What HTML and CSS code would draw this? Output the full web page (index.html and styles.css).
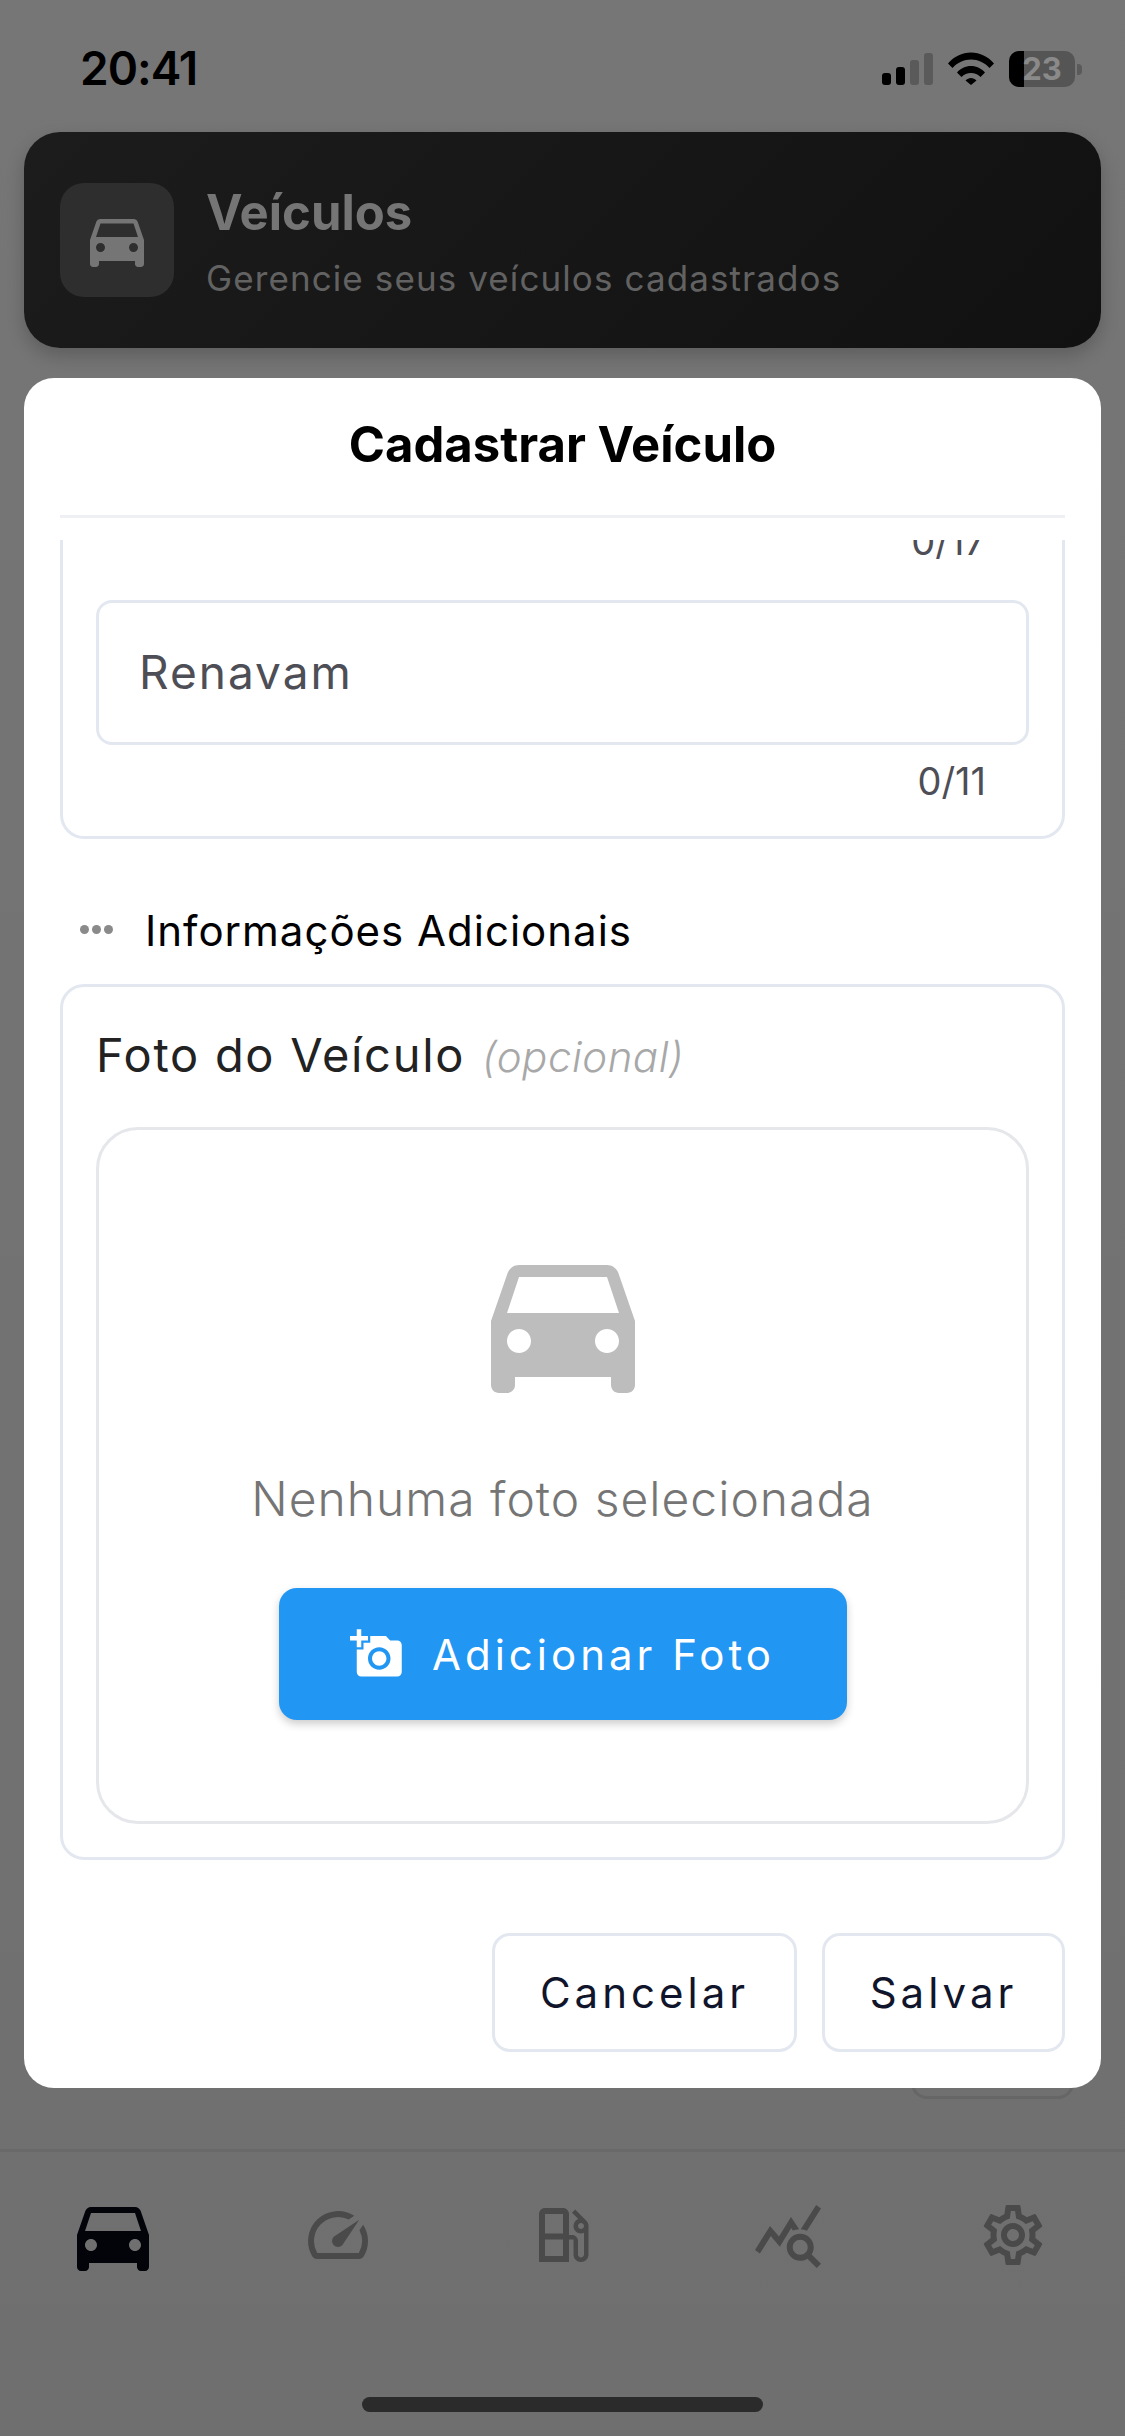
FILE: index.html
```html
<!DOCTYPE html>
<html lang="pt-BR">
<head>
<meta charset="UTF-8">
<title>Veículos</title>
<link rel="stylesheet" href="styles.css">
</head>
<body>
<svg class="defs" width="0" height="0">
  <symbol id="car" viewBox="0 0 24 24"><path fill-rule="evenodd" d="M18.92 6.01C18.72 5.42 18.16 5 17.5 5h-11c-.66 0-1.21.42-1.42 1.01L3 12v8c0 .55.45 1 1 1h1c.55 0 1-.45 1-1v-1h12v1c0 .55.45 1 1 1h1c.55 0 1-.45 1-1v-8l-2.08-5.99zM6.5 16c-.83 0-1.5-.67-1.5-1.5S5.67 13 6.5 13s1.5.67 1.5 1.5S7.33 16 6.5 16zm11 0c-.83 0-1.5-.67-1.5-1.5s.67-1.5 1.5-1.5 1.5.67 1.5 1.5-.67 1.5-1.5 1.5zM5 11l1.5-4.5h11L19 11H5z"/></symbol>
</svg>

<div class="screen">
  <div class="statusbar">
    <span class="clock">20:41</span>
    <div class="status-icons">
      <div class="signal">
        <i class="bar bar1"></i><i class="bar bar2"></i><i class="bar bar3"></i><i class="bar bar4"></i>
      </div>
      <svg class="wifi" viewBox="0 0 46 33"><path d="M0 11.5C6 4.5 14 .5 23 .5s17 4 23 11l-4.5 4.5C36.500 10.500 30 7.500 23 7.500S9.500 10.500 4.500 16z"/><path d="M9 20.500C12.500 16.500 17.500 14 23 14s10.500 2.500 14 6.500l-4.500 4.500C30 22.500 26.700 21 23 21s-7 1.500-9.500 4z"/><path d="M17.500 28.500c1.500-1.500 3.500-2.500 5.500-2.500s4 1 5.500 2.500L23 33z"/></svg>
      <div class="battery">
        <div class="battery-body"><i class="battery-fill"></i><span class="battery-num">23</span></div>
        <i class="battery-nub"></i>
      </div>
    </div>
  </div>

  <div class="page-head">
    <div class="page-head-icon"><svg class="icon72"><use href="#car"/></svg></div>
    <div class="page-head-text">
      <div class="page-title">Veículos</div>
      <div class="page-sub">Gerencie seus veículos cadastrados</div>
    </div>
  </div>

  <div class="content">
    <div class="behind-btn"></div>
  </div>

  <div class="tabbar">
    <div class="tab tab-active"><svg class="icon96"><use href="#car"/></svg></div>
    <div class="tab"><svg class="icon72" viewBox="0 0 24 24"><path d="M20.38 8.57l-1.23 1.85a8 8 0 0 1-.22 7.58H5.07A8 8 0 0 1 15.58 6.85l1.85-1.23A10 10 0 0 0 3.35 19a2 2 0 0 0 1.72 1h13.85a2 2 0 0 0 1.74-1 10 10 0 0 0-.27-10.44zm-9.79 6.84a2 2 0 0 0 2.83 0l5.66-8.49-8.49 5.66a2 2 0 0 0 0 2.83z"/></svg></div>
    <div class="tab"><svg class="icon72" viewBox="0 0 24 24"><path fill-rule="evenodd" d="M19.77 7.23l.01-.01-3.72-3.72L15 4.56l2.11 2.11c-.94.36-1.61 1.26-1.61 2.33 0 1.38 1.12 2.5 2.5 2.5.36 0 .69-.08 1-.21v7.21c0 .55-.45 1-1 1s-1-.45-1-1V14c0-1.1-.9-2-2-2h-1V5c0-1.1-.9-2-2-2H6c-1.1 0-2 .9-2 2v16h10v-7.500h1.500v5c0 1.380 1.120 2.500 2.500 2.500s2.500-1.120 2.500-2.500V9c0-.69-.28-1.320-.73-1.770zM12 13.500V19H6v-5.500h6zm0-2H6V5h6v6.500zM18 10c-.55 0-1-.45-1-1s.45-1 1-1 1 .45 1 1-.45 1-1 1z"/></svg></div>
    <div class="tab"><svg class="icon72" viewBox="0 0 24 24"><path fill-rule="evenodd" d="M19.88 18.47c.44-.7.7-1.51.7-2.39 0-2.49-2.01-4.5-4.5-4.5s-4.5 2.01-4.5 4.5 2.01 4.5 4.49 4.5c.88 0 1.7-.26 2.39-.7L21.58 23 23 21.58l-3.12-3.11zm-3.8.11c-1.38 0-2.5-1.12-2.5-2.5s1.12-2.5 2.5-2.5 2.5 1.12 2.5 2.5-1.12 2.5-2.5 2.5zm-.36-8.5c-.74.02-1.45.18-2.1.45l-.55-.83-3.8 6.18-3.01-3.52-3.63 5.81L1 17l5-8 3 3.5L13 6l2.72 4.08zm2.59.5c-.64-.28-1.33-.45-2.05-.49L21.38 2 23 3.18l-4.69 7.4z"/></svg></div>
    <div class="tab"><svg class="icon72" viewBox="0 0 24 24"><path fill-rule="evenodd" d="M19.43 12.98c.04-.32.07-.64.07-.98 0-.34-.03-.66-.07-.98l2.11-1.65c.19-.15.24-.42.12-.64l-2-3.46c-.09-.16-.26-.25-.44-.25-.06 0-.12.01-.17.03l-2.49 1c-.52-.4-1.08-.73-1.69-.98l-.38-2.65C14.46 2.18 14.25 2 14 2h-4c-.25 0-.46.18-.49.42l-.38 2.65c-.61.25-1.17.59-1.69.98l-2.49-1c-.06-.02-.12-.03-.18-.03-.17 0-.34.09-.43.25l-2 3.46c-.13.22-.07.49.12.64l2.11 1.65c-.04.32-.07.65-.07.98 0 .33.03.66.07.98l-2.11 1.65c-.19.15-.24.42-.12.64l2 3.46c.09.16.26.25.44.25.06 0 .12-.01.17-.03l2.49-1c.52.4 1.08.73 1.69.98l.38 2.65c.03.24.24.42.49.42h4c.25 0 .46-.18.49-.42l.38-2.65c.61-.25 1.17-.59 1.69-.98l2.49 1c.06.02.12.03.18.03.17 0 .34-.09.43-.25l2-3.46c.12-.22.07-.49-.12-.64l-2.11-1.65zm-1.98-1.71c.04.31.05.52.05.73 0 .21-.02.43-.05.73l-.14 1.13.89.7 1.08.84-.7 1.21-1.27-.51-1.04-.42-.9.68c-.43.32-.84.56-1.25.73l-1.06.43-.16 1.13-.2 1.35h-1.4l-.19-1.35-.16-1.13-1.06-.43c-.43-.18-.83-.41-1.23-.71l-.91-.7-1.06.43-1.27.51-.7-1.21 1.08-.84.89-.7-.14-1.13c-.03-.31-.05-.54-.05-.74s.02-.43.05-.73l.14-1.13-.89-.7-1.08-.84.7-1.21 1.27.51 1.04.42.9-.68c.43-.32.84-.56 1.25-.73l1.06-.43.16-1.13.2-1.35h1.39l.19 1.35.16 1.13 1.06.43c.43.18.83.41 1.23.71l.91.7 1.06-.43 1.27-.51.7 1.21-1.07.85-.89.7.14 1.13zM12 8c-2.21 0-4 1.79-4 4s1.79 4 4 4 4-1.790 4-4-1.790-4-4-4zm0 6c-1.100 0-2-.9-2-2s.9-2 2-2 2 .9 2 2-.9 2-2 2z"/></svg></div>
  </div>

  <div class="home-bar"><i class="home-pill"></i></div>

  <!-- modal sits over the dimmed page -->
  <div class="modal">
    <div class="modal-title">Cadastrar Veículo</div>
    <div class="modal-scroll">
      <div class="card card-cut">
        <div class="counter counter-cut">0/17</div>
        <div class="input">Renavam</div>
        <div class="counter">0/11</div>
      </div>

      <div class="section-head">
        <span class="dots"><i></i><i></i><i></i></span>
        <span class="section-title">Informações Adicionais</span>
      </div>

      <div class="card card-photo">
        <div class="photo-label">Foto do Veículo <em>(opcional)</em></div>
        <div class="photo-box">
          <svg class="photo-car"><use href="#car"/></svg>
          <div class="photo-empty">Nenhuma foto selecionada</div>
          <div class="add-photo">
            <svg class="add-photo-icon" viewBox="0 0 24 24"><path fill-rule="evenodd" d="M3 4V1h2v3h3v2H5v3H3V6H0V4h3zm3 6V7h3V4h7l1.830 2H21c1.100 0 2 .9 2 2v12c0 1.100-.9 2-2 2H5c-1.100 0-2-.9-2-2V10h3zm7 9c2.760 0 5-2.240 5-5s-2.240-5-5-5-5 2.240-5 5 2.240 5 5 5zm-3.200-5c0 1.770 1.430 3.200 3.200 3.200s3.200-1.430 3.200-3.200-1.430-3.200-3.200-3.200-3.200 1.430-3.200 3.200z"/></svg>
            <span>Adicionar Foto</span>
          </div>
        </div>
      </div>
    </div>
    <div class="modal-actions">
      <div class="btn btn-cancel">Cancelar</div>
      <div class="btn btn-save">Salvar</div>
    </div>
  </div>
</div>
</body>
</html>
```

FILE: styles.css
```css
html, body {
  margin: 0;
  padding: 0;
}
body {
  font-family: Inter, "Liberation Sans", sans-serif;
  background: #727272;
}
.defs { position: absolute; }

.screen {
  position: relative;
  width: 1125px;
  height: 2436px;
  overflow: hidden;
  display: flex;
  flex-direction: column;
  background: linear-gradient(#767676, #6f6f6f);
}

/* status bar */
.statusbar {
  height: 132px;
  box-sizing: border-box;
  padding: 42px 43px 0 80px;
  display: flex;
  justify-content: space-between;
  align-items: flex-start;
  flex-shrink: 0;
}
.clock {
  font-size: 46px;
  font-weight: 600;
  line-height: 52px;
  letter-spacing: -1px;
  color: #000;
}
.status-icons {
  display: flex;
  align-items: flex-start;
  padding-top: 9px;
}
.signal {
  display: flex;
  align-items: flex-end;
  gap: 5px;
  height: 33px;
  margin-top: 1px;
  margin-right: 15px;
}
.bar {
  display: block;
  width: 9px;
  border-radius: 3px;
  background: #5a5a5a;
}
.bar1 { height: 12px; background: #000; }
.bar2 { height: 18px; background: #000; }
.bar3 { height: 25px; }
.bar4 { height: 32px; }
.wifi {
  width: 46px;
  height: 33px;
  margin-top: 1px;
  margin-right: 15px;
}
.battery {
  display: flex;
  align-items: center;
  height: 36px;
}
.battery-body {
  position: relative;
  width: 66px;
  height: 36px;
  border-radius: 10px;
  overflow: hidden;
  background: #555;
  display: flex;
  align-items: center;
  justify-content: center;
}
.battery-fill {
  position: absolute;
  left: 0;
  top: 0;
  bottom: 0;
  width: 15px;
  background: #000;
}
.battery-num {
  position: relative;
  font-size: 31px;
  line-height: 36px;
  font-weight: 700;
  color: #8a8a8a;
}
.battery-nub {
  display: block;
  width: 5px;
  height: 11px;
  margin-left: 2px;
  border-radius: 0 4px 4px 0;
  background: #5a5a5a;
}

/* page header behind the modal */
.page-head {
  height: 216px;
  margin: 0 24px;
  box-sizing: border-box;
  padding: 51px 36px 0;
  display: flex;
  gap: 32px;
  flex-shrink: 0;
  border-radius: 36px;
  background: linear-gradient(135deg, #1c1c1c, #111);
  box-shadow: 0 8px 18px rgba(0, 0, 0, .2);
}
.page-head-icon {
  width: 114px;
  height: 114px;
  border-radius: 24px;
  background: #2e2e2e;
  display: flex;
  align-items: center;
  justify-content: center;
}
.icon72 {
  width: 72px;
  height: 72px;
  fill: #4a4a4a;
}
.page-head-icon .icon72 { fill: #757575; }
.icon96 {
  width: 96px;
  height: 96px;
  fill: #02040a;
}
.page-title {
  font-size: 49px;
  font-weight: 700;
  line-height: 54px;
  margin-top: 3px;
  color: #757575;
}
.page-sub {
  font-size: 35px;
  line-height: 44px;
  margin-top: 16px;
  letter-spacing: 1.100px;
  color: #626262;
}

.content {
  flex: 1;
  display: flex;
  flex-direction: column;
  justify-content: flex-end;
  align-items: flex-end;
  padding: 0 51px 50px 0;
}
.behind-btn {
  width: 163px;
  height: 60px;
  box-sizing: border-box;
  border: 3px solid #666;
  border-radius: 16px;
}

/* bottom tabs */
.tabbar {
  height: 150px;
  box-sizing: border-box;
  border-top: 3px solid #696969;
  padding-top: 35px;
  display: grid;
  grid-template-columns: repeat(5, 225px);
  flex-shrink: 0;
}
.tab {
  display: flex;
  justify-content: center;
  height: 96px;
  align-items: center;
}
.home-bar {
  height: 137px;
  display: flex;
  justify-content: center;
  align-items: flex-end;
  padding-bottom: 24px;
  box-sizing: border-box;
  flex-shrink: 0;
}
.home-pill {
  display: block;
  width: 401px;
  height: 15px;
  border-radius: 8px;
  background: #2b2b2b;
}

/* modal */
.modal {
  position: absolute;
  left: 24px;
  top: 378px;
  width: 1077px;
  height: 1710px;
  box-sizing: border-box;
  padding: 0 36px 36px;
  display: flex;
  flex-direction: column;
  border-radius: 30px;
  background: #fff;
}
.modal-title {
  height: 137px;
  border-bottom: 3px solid #eef0f4;
  flex-shrink: 0;
  text-align: center;
  font-size: 49px;
  font-weight: 700;
  line-height: 134px;
  color: #000;
}
.modal-scroll {
  flex: 1;
  min-height: 0;
  margin-top: 22px;
  overflow: hidden;
}
.card {
  box-sizing: border-box;
  border: 3px solid #e3e8f0;
  border-radius: 24px;
  background: #fff;
}
.card-cut {
  margin-top: -21px;
  padding: 0 33px 33px;
  border-top: 0;
  border-radius: 0 0 24px 24px;
}
.input {
  height: 145px;
  box-sizing: border-box;
  border: 3px solid #e3e8f0;
  border-radius: 16px;
  padding-left: 40px;
  font-size: 46px;
  line-height: 139px;
  letter-spacing: 2px;
  color: #4e4e56;
}
.counter {
  height: 44px;
  margin-top: 14px;
  padding-right: 43px;
  text-align: right;
  font-size: 38px;
  line-height: 44px;
  color: #4e4e56;
}
.counter-cut {
  margin-top: 0;
  margin-bottom: 37px;
}
.section-head {
  display: flex;
  align-items: center;
  height: 60px;
  margin-top: 60px;
  margin-bottom: 25px;
}
.dots {
  display: flex;
  gap: 3px;
  width: 85px;
  padding-left: 20px;
  box-sizing: border-box;
}
.dots i {
  display: block;
  width: 9px;
  height: 9px;
  border-radius: 50%;
  background: #8a8a8a;
}
.section-title {
  font-size: 42px;
  font-weight: 400;
  letter-spacing: 1px;
  color: #000;
  position: relative;
  top: 1px;
}
.card-photo {
  height: 876px;
  padding: 33px 33px 0;
}
.photo-label {
  font-size: 47px;
  font-weight: 400;
  line-height: 70px;
  letter-spacing: 1.700px;
  color: #222;
}
.photo-label em {
  font-size: 42px;
  font-weight: 300;
  letter-spacing: .5px;
  color: #a8a8a8;
  margin-left: 2px;
}
.photo-box {
  height: 697px;
  margin-top: 35px;
  box-sizing: border-box;
  border: 3px solid #e5e7eb;
  border-radius: 42px;
  padding-top: 95px;
  display: flex;
  flex-direction: column;
  align-items: center;
}
.photo-car {
  width: 192px;
  height: 192px;
  fill: #bdbdbd;
  flex-shrink: 0;
}
.photo-empty {
  margin-top: 52px;
  font-size: 48px;
  font-weight: 300;
  line-height: 60px;
  letter-spacing: 1px;
  color: #757575;
}
.add-photo {
  width: 568px;
  height: 132px;
  margin-top: 59px;
  display: flex;
  align-items: center;
  justify-content: center;
  gap: 28px;
  border-radius: 18px;
  background: #2196f3;
  box-shadow: 0 4px 8px rgba(0, 0, 0, .2);
  font-size: 42px;
  font-weight: 400;
  letter-spacing: 4px;
  color: #fff;
}
.add-photo-icon {
  width: 54px;
  height: 54px;
  fill: #fff;
}
.modal-actions {
  display: flex;
  justify-content: flex-end;
  gap: 25px;
  flex-shrink: 0;
}
.btn {
  height: 119px;
  box-sizing: border-box;
  border: 3px solid #e3e8f0;
  border-radius: 18px;
  display: flex;
  align-items: center;
  justify-content: center;
  font-size: 42px;
  font-weight: 400;
  letter-spacing: 4px;
  color: #10152b;
}
.btn-cancel { width: 305px; }
.btn-save { width: 243px; }
```
